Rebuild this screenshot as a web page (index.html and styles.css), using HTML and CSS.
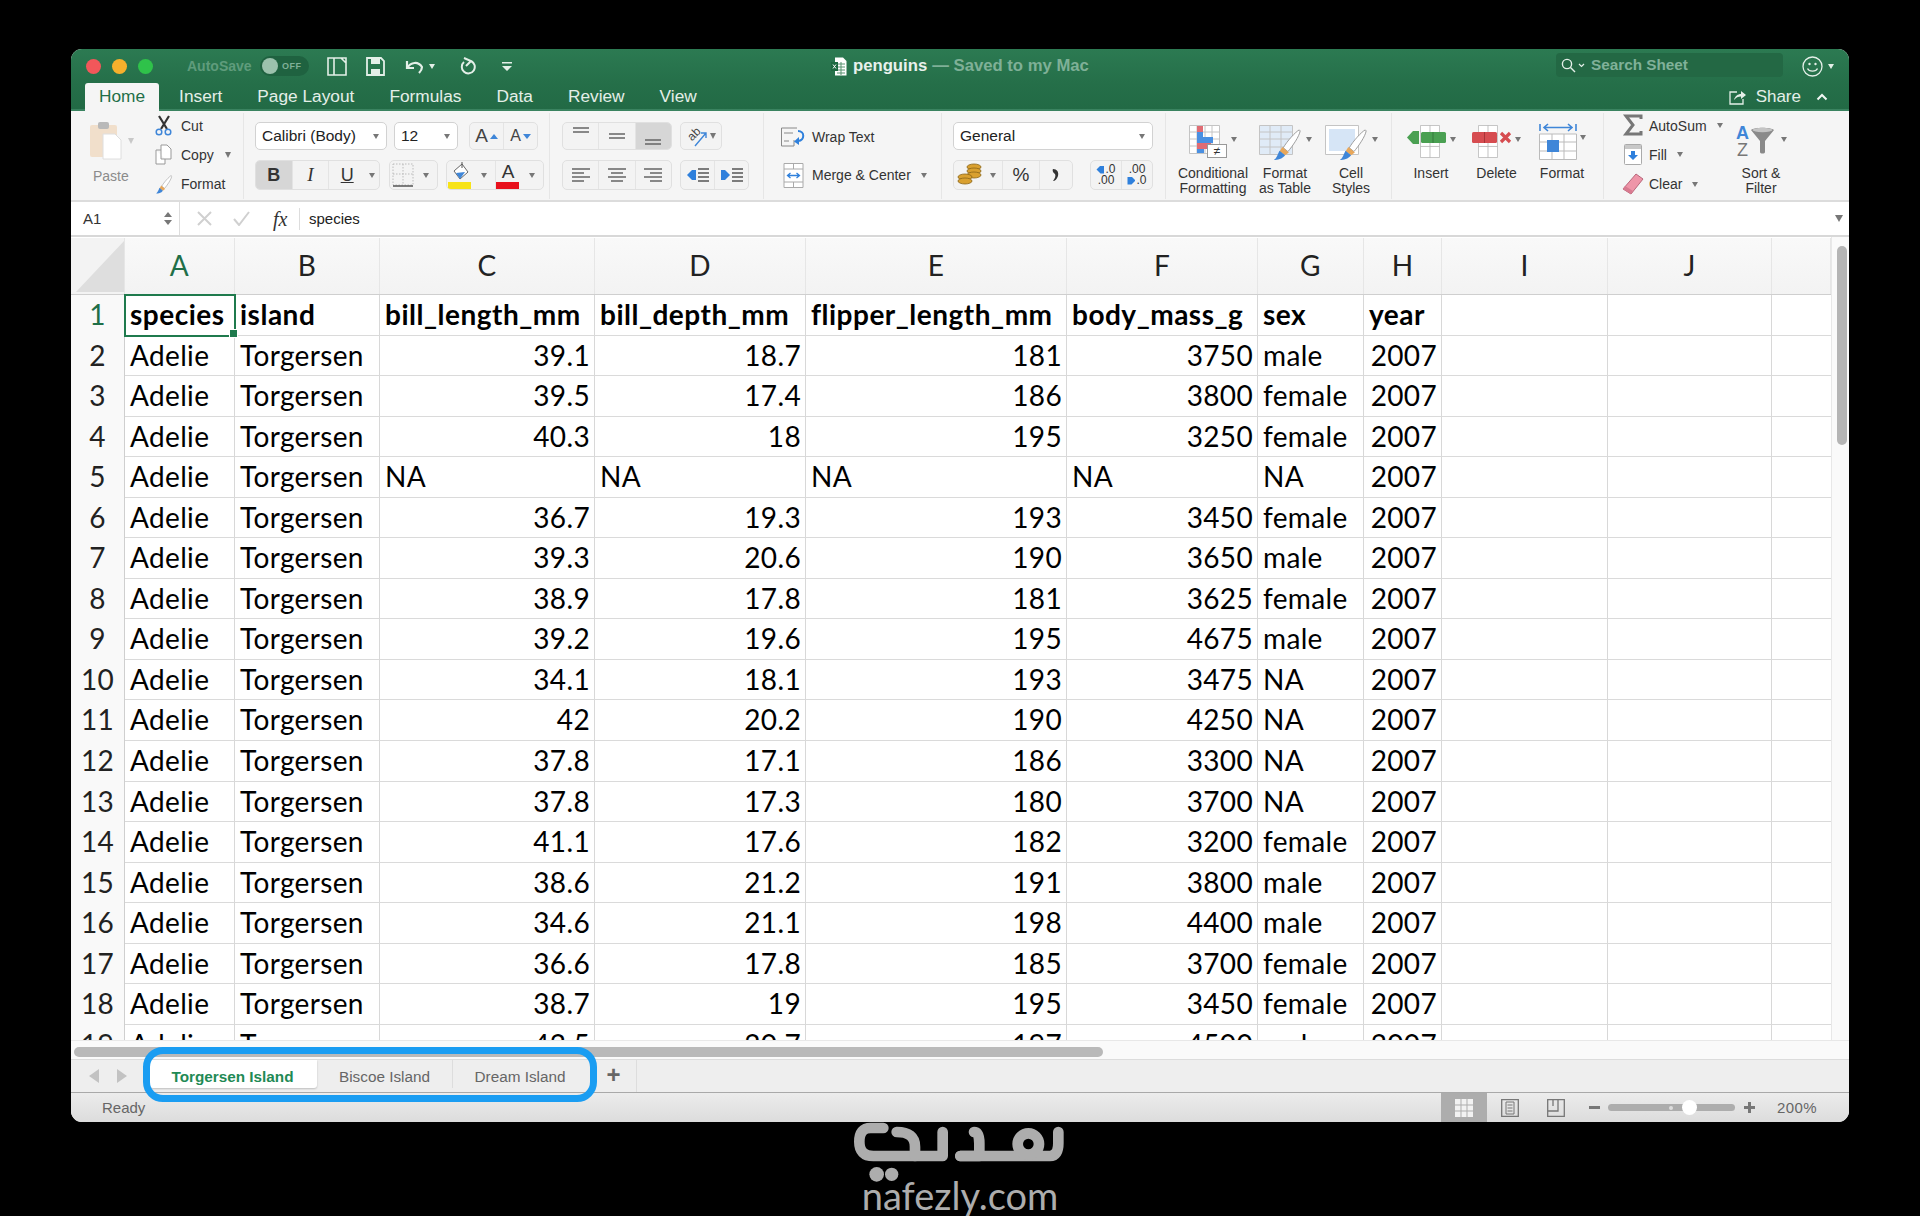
FILE: index.html
```html
<!DOCTYPE html>
<html>
<head>
<title>penguins - Excel</title>
<link rel="stylesheet" href="styles.css">
</head>
<body>

<svg class="defs" width="0" height="0">
    <symbol id="brush" viewBox="0 0 30 34">
        <path d="M28 1 C24 3 15 13 11 20 L16 24 C21 18 28 8 29 2 Z" fill="#fff" stroke="#999" stroke-width="1"/>
        <path d="M10 19 L17 25 L13 28 L7 24 Z" fill="#e8a75a"/>
        <path d="M7 23 L13 28 C10 32 5 33 1 33 C4 31 5 27 7 23 Z" fill="#3f86d8"/>
    </symbol>
    <symbol id="cellgrid" viewBox="0 0 24 40">
        <path d="M.5 .5 H23.5 V39.5 H.5 Z M12 .5 V39.5 M.5 13 H23.5 M.5 26 H23.5" fill="#fff" stroke="#b5b5b5"/>
    </symbol>
</svg>

<div class="window">

    <div class="titlebar">
        <div class="lights">
            <span class="light red"></span>
            <span class="light yellow"></span>
            <span class="light green"></span>
        </div>
        <span class="autosave">AutoSave</span>
        <span class="toggle"><i></i>OFF</span>
        <svg class="qa sidebar" width="20" height="19" viewBox="0 0 20 19"><path d="M1 1 H19 V18 H1 Z M7 1 V18 M7 1 H14 L19 6" fill="none" stroke="#e4efe8" stroke-width="1.6"/></svg>
        <svg class="qa save" width="19" height="19" viewBox="0 0 19 19"><path d="M1 1 H15 L18 4 V18 H1 Z" fill="none" stroke="#e4efe8" stroke-width="1.8"/><path d="M5 1 H14 V7 H5 Z M5 12 H14 V18 H5 Z" fill="#e4efe8"/></svg>
        <svg class="qa undo" width="19" height="15" viewBox="0 0 19 15"><path d="M2 2 V9 H9 M2 9 C6 3 13 2 17 8 C17 10 16 12 14 14" fill="none" stroke="#e4efe8" stroke-width="2.2"/></svg>
        <span class="caret light-caret"></span>
        <svg class="qa redo" width="16" height="19" viewBox="0 0 16 19"><path d="M11 4 A6.5 6.5 0 1 1 4 5 M4 1 L11 4 L6 9" fill="none" stroke="#e4efe8" stroke-width="2"/></svg>
        <svg class="qa more" width="12" height="11" viewBox="0 0 12 11"><path d="M1 1 H11 V2.5 H1 Z M1 5 H11 L6 10 Z" fill="#e4efe8"/></svg>
        <div class="doc-title">
            <svg width="16" height="19" viewBox="0 0 16 19"><path d="M4 .5 H12 L15.5 4 V18.5 H4 Z" fill="#fff"/><path d="M6 7 H14 M6 10 H14 M6 13 H14 M6 16 H14 M10 5 V18" stroke="#57916f"/><path d="M0 5 H7 V14 H0 Z" fill="#1d6a41"/><path d="M2 7.5 L5 11.5 M5 7.5 L2 11.5" stroke="#fff"/></svg>
            <b>penguins</b><span>— Saved to my Mac</span>
        </div>
        <div class="search">
            <svg width="15" height="15" viewBox="0 0 15 15"><circle cx="6" cy="6" r="4.6" fill="none" stroke="#e4efe8" stroke-width="1.4"/><path d="M9.5 9.5 L14 14" stroke="#e4efe8" stroke-width="1.4"/></svg>
            <svg width="7" height="5" viewBox="0 0 7 5"><path d="M1 1 L3.5 3.5 L6 1" fill="none" stroke="#e4efe8" stroke-width="1.2"/></svg>
            <span>Search Sheet</span>
        </div>
        <svg class="smile" width="21" height="21" viewBox="0 0 21 21"><circle cx="10.5" cy="10.5" r="9.5" fill="none" stroke="#e4efe8" stroke-width="1.3"/><circle cx="7.5" cy="8" r="1.2" fill="#e4efe8"/><circle cx="13.5" cy="8" r="1.2" fill="#e4efe8"/><path d="M5.5 12.5 C7 16 14 16 15.5 12.5" fill="none" stroke="#e4efe8" stroke-width="1.3"/></svg>
        <span class="caret light-caret"></span>
    </div>

    <div class="tabsbar">
        <span class="ribbon-tab active">Home</span>
        <span class="ribbon-tab">Insert</span>
        <span class="ribbon-tab">Page Layout</span>
        <span class="ribbon-tab">Formulas</span>
        <span class="ribbon-tab">Data</span>
        <span class="ribbon-tab">Review</span>
        <span class="ribbon-tab">View</span>
        <div class="share">
            <svg width="18" height="16" viewBox="0 0 18 16"><path d="M8 3 H1 V15 H14 V10" fill="none" stroke="#e4efe8" stroke-width="1.3"/><path d="M5 11 C6 7 9 5 12 5 V2 L17 6 L12 10 V7.5 C9 7.5 7 8.5 5 11 Z" fill="#e4efe8"/></svg>
            <span>Share</span>
            <svg class="collapse" width="12" height="8" viewBox="0 0 12 8"><path d="M1.5 6.5 L6 2 L10.5 6.5" fill="none" stroke="#f2f7f4" stroke-width="2"/></svg>
        </div>
    </div>

    <div class="ribbon">

        <div class="group clipboard">
            <div class="paste">
                <div class="paste-icon">
                    <svg width="34" height="40" viewBox="0 0 34 40"><rect x="1" y="4" width="27" height="32" rx="2" fill="#f1dfcb"/><rect x="9" y="1" width="11" height="7" rx="2" fill="#b9b9b9"/><path d="M14 13 H26 L32 19 V38 H14 Z" fill="#fff" stroke="#dedede"/></svg>
                    <span class="caret dim"></span>
                </div>
                <span class="label muted">Paste</span>
            </div>
            <div class="clip-list">
                <div class="clip-row">
                    <svg width="18" height="21" viewBox="0 0 18 21"><path d="M4 1 L12 14 M14 1 L6 14" stroke="#333" stroke-width="2.2"/><circle cx="4" cy="17" r="2.8" fill="none" stroke="#3f86d8" stroke-width="1.5"/><circle cx="13" cy="17" r="2.8" fill="none" stroke="#3f86d8" stroke-width="1.5"/></svg>
                    <span>Cut</span>
                </div>
                <div class="clip-row">
                    <svg width="18" height="21" viewBox="0 0 18 21"><path d="M6 1 H12 L16 5 V15 H6 Z M1 6 H6 M1 6 V20 H10 V15" fill="#fff" stroke="#999"/></svg>
                    <span>Copy</span><span class="caret"></span>
                </div>
                <div class="clip-row">
                    <svg width="20" height="19" viewBox="0 0 30 34"><use href="#brush"/></svg>
                    <span>Format</span>
                </div>
            </div>
        </div>

        <div class="group font">
            <div class="tool-row">
                <div class="select font-name"><span>Calibri (Body)</span><span class="caret"></span></div>
                <div class="select font-size"><span>12</span><span class="caret"></span></div>
                <div class="btns font-grow">
                    <span class="btn"><span class="big-a">A</span><span class="up"></span></span>
                    <span class="btn"><span class="small-a">A</span><span class="down"></span></span>
                </div>
            </div>
            <div class="tool-row second">
                <div class="btns biu">
                    <span class="btn on"><b>B</b></span>
                    <span class="btn"><i class="serif-i">I</i></span>
                    <span class="btn"><u>U</u></span>
                    <span class="btn narrow"><span class="caret"></span></span>
                </div>
                <div class="btns borders">
                    <span class="btn"><svg width="22" height="24" viewBox="0 0 22 24"><path d="M1 1 H21 V22 H1 Z M11 1 V22 M1 11 H21" fill="none" stroke="#bbb" stroke-dasharray="1.5 1.5"/><path d="M1 23 H21" stroke="#555" stroke-width="1.5"/></svg></span>
                    <span class="btn narrow"><span class="caret"></span></span>
                </div>
                <div class="btns colors">
                    <span class="btn"><svg width="24" height="28" viewBox="0 0 24 28"><path d="M6 10 L14 3 L20 11 L12 18 Z" fill="#fff" stroke="#666"/><path d="M8 12 L17 11 L12 18 Z" fill="#3f86d8"/><path d="M14 1 V7" stroke="#555"/><rect y="21" width="23" height="7" fill="#f7e318"/></svg></span>
                    <span class="btn narrow"><span class="caret"></span></span>
                    <span class="btn"><svg width="24" height="28" viewBox="0 0 24 28"><text x="12" y="17" text-anchor="middle" class="icon-a">A</text><rect y="21" width="23" height="7" fill="#e8101c"/></svg></span>
                    <span class="btn narrow"><span class="caret"></span></span>
                </div>
            </div>
        </div>

        <div class="group align">
            <div class="tool-row">
                <div class="btns triple">
                    <span class="btn"><svg width="16" height="20" viewBox="0 0 16 20"><path d="M0 2 H16 M0 6 H16" stroke="#666" stroke-width="1.3"/></svg></span>
                    <span class="btn"><svg width="16" height="20" viewBox="0 0 16 20"><path d="M0 8 H16 M0 12 H16" stroke="#666" stroke-width="1.3"/></svg></span>
                    <span class="btn on"><svg width="16" height="20" viewBox="0 0 16 20"><path d="M0 14 H16 M0 18 H16" stroke="#666" stroke-width="1.3"/></svg></span>
                </div>
                <div class="btns orient">
                    <span class="btn"><svg width="24" height="24" viewBox="0 0 24 24"><text x="12" y="13" text-anchor="middle" transform="rotate(-45 12 12)" class="icon-ab">ab</text><path d="M11 22 L22 9 M17 9 H22 V14" fill="none" stroke="#3f86d8" stroke-width="1.4"/></svg></span>
                    <span class="caret"></span>
                </div>
            </div>
            <div class="tool-row second">
                <div class="btns triple">
                    <span class="btn"><svg width="18" height="14" viewBox="0 0 18 14"><path d="M0 1 H18 M0 5 H12 M0 9 H18 M0 13 H12" stroke="#666" stroke-width="1.3"/></svg></span>
                    <span class="btn"><svg width="18" height="14" viewBox="0 0 18 14"><path d="M0 1 H18 M3 5 H15 M0 9 H18 M3 13 H15" stroke="#666" stroke-width="1.3"/></svg></span>
                    <span class="btn"><svg width="18" height="14" viewBox="0 0 18 14"><path d="M0 1 H18 M6 5 H18 M0 9 H18 M6 13 H18" stroke="#666" stroke-width="1.3"/></svg></span>
                </div>
                <div class="btns indent">
                    <span class="btn"><svg width="22" height="14" viewBox="0 0 22 14"><path d="M0 7 L5 2 H9 V12 H5 Z" fill="#2f80dc"/><path d="M11 1 H22 M11 5 H22 M11 9 H22 M11 13 H22" stroke="#555" stroke-width="1.3"/></svg></span>
                    <span class="btn"><svg width="22" height="14" viewBox="0 0 22 14"><path d="M9 7 L4 2 H0 V12 H4 Z" fill="#2f80dc"/><path d="M11 1 H22 M11 5 H22 M11 9 H22 M11 13 H22" stroke="#555" stroke-width="1.3"/></svg></span>
                </div>
            </div>
        </div>

        <div class="group wrap">
            <div class="wrap-row">
                <svg width="25" height="20" viewBox="0 0 25 20"><path d="M.5 1 H16 M.5 1 V19 H13 V13 M3 6 H12 M3 14 H8" fill="none" stroke="#888"/><path d="M17 4 C24 4 24 13 17 14" fill="none" stroke="#2f80dc" stroke-width="2"/><path d="M18 10 L13 14.5 L18 18 Z" fill="#2f80dc"/></svg>
                <span>Wrap Text</span>
            </div>
            <div class="wrap-row">
                <svg width="20" height="25" viewBox="0 0 20 25"><path d="M.5 .5 H19.5 V24.5 H.5 Z M.5 6 H19.5 M.5 19 H19.5 M10 .5 V6 M10 19 V24.5" fill="#fff" stroke="#aaa"/><path d="M4 12.5 H16 M7 10 L4 12.5 L7 15 M13 10 L16 12.5 L13 15" fill="none" stroke="#2f80dc" stroke-width="1.3"/></svg>
                <span>Merge &amp; Center</span><span class="caret"></span>
            </div>
        </div>

        <div class="group number">
            <div class="tool-row">
                <div class="select number-format"><span>General</span><span class="caret"></span></div>
            </div>
            <div class="tool-row second">
                <div class="btns currency">
                    <span class="btn coins"><svg width="25" height="24" viewBox="0 0 25 24"><g fill="#d9a02f" stroke="#8a6416" stroke-width=".8"><ellipse cx="17" cy="4" rx="7" ry="3"/><ellipse cx="17" cy="8" rx="7" ry="3"/><ellipse cx="17" cy="12" rx="7" ry="3"/><ellipse cx="8" cy="14" rx="7" ry="3"/><ellipse cx="8" cy="18" rx="7" ry="3"/></g></svg></span>
                    <span class="btn narrow"><span class="caret"></span></span>
                    <span class="btn percent">%</span>
                    <span class="btn comma"><svg width="8" height="14" viewBox="0 0 8 14"><path d="M1 1 C5 1 7 4 6 8 C5 11 3 13 1 13 C3 10 4 8 3 6 C1 5 0 2 1 1 Z" fill="#333"/></svg></span>
                </div>
                <div class="btns decimals">
                    <span class="btn dec"><span class="dec-line"><em class="arrow-left"></em>.0</span><span class="dec-line">.00</span></span>
                    <span class="btn dec"><span class="dec-line">.00</span><span class="dec-line"><em class="arrow-right"></em>.0</span></span>
                </div>
            </div>
        </div>

        <div class="group styles">
            <div class="big-tool w-cond">
                <div class="big-icon">
                    <svg width="39" height="33" viewBox="0 0 39 33"><path d="M.5 .5 H30.5 V28.5 H.5 Z M8 .5 V28.5 M16 .5 V28.5 M23 .5 V28.5 M.5 7 H30.5 M.5 14 H30.5 M.5 21 H30.5" fill="#fff" stroke="#c4c4c4"/><path d="M8 1 H14 V7 H8 Z M8 18 H22 V24 H8 Z" fill="#e06c74"/><path d="M8 7 H14 V12 H8 Z M8 12 H24 V18 H8 Z M8 24 H15 V28 H8 Z" fill="#4a90e2"/><rect x="18.500" y="19.500" width="19" height="13" fill="#fff" stroke="#999"/><text x="28" y="30" text-anchor="middle" class="icon-ne">≠</text></svg>
                    <span class="caret"></span>
                </div>
                <span class="label">Conditional<br>Formatting</span>
            </div>
            <div class="big-tool w-table">
                <div class="big-icon">
                    <svg width="44" height="36" viewBox="0 0 44 36"><path d="M.5 .5 H33.5 V29.5 H.5 Z M11 .5 V29.5 M22 .5 V29.5 M.5 7 H33.5 M.5 14 H33.5 M.5 22 H33.5" fill="#e0ebf7" stroke="#c4c4c4"/><svg x="13" y="4" width="30" height="32" viewBox="0 0 30 34"><use href="#brush"/></svg></svg>
                    <span class="caret"></span>
                </div>
                <span class="label">Format<br>as Table</span>
            </div>
            <div class="big-tool w-cell">
                <div class="big-icon">
                    <svg width="44" height="36" viewBox="0 0 44 36"><path d="M.5 .5 H33.5 V29.5 H.5 Z" fill="#fff" stroke="#c4c4c4"/><path d="M4 4 H30 V26 H4 Z" fill="#d6e5f6"/><svg x="13" y="4" width="30" height="32" viewBox="0 0 30 34"><use href="#brush"/></svg></svg>
                    <span class="caret"></span>
                </div>
                <span class="label">Cell<br>Styles</span>
            </div>
        </div>

        <div class="group cells">
            <div class="big-tool w-insert">
                <div class="big-icon">
                    <svg width="40" height="33" viewBox="0 0 40 33"><svg x="13" y="0" width="20" height="33" viewBox="0 0 24 40"><use href="#cellgrid"/></svg><rect x="14" y="7" width="25" height="11" rx="1.5" fill="#4aa052"/><path d="M26 7 V18" stroke="#357a3c"/><path d="M0 12.500 L6 6 H12 V19 H6 Z" fill="#4aa052"/></svg>
                    <span class="caret"></span>
                </div>
                <span class="label">Insert</span>
            </div>
            <div class="big-tool w-delete">
                <div class="big-icon">
                    <svg width="40" height="33" viewBox="0 0 40 33"><svg x="6" y="0" width="20" height="33" viewBox="0 0 24 40"><use href="#cellgrid"/></svg><rect x="0" y="7" width="25" height="11" rx="1.5" fill="#d64c50"/><path d="M12.500 7 V18" stroke="#a83437"/><path d="M29 8 L38 17 M38 8 L29 17" stroke="#d64c50" stroke-width="3.2"/></svg>
                    <span class="caret"></span>
                </div>
                <span class="label">Delete</span>
            </div>
            <div class="big-tool w-format">
                <div class="big-icon format-icon">
                    <svg width="38" height="37" viewBox="0 0 38 37"><path d="M1 1 V8 M37 1 V8 M5 4.500 H33 M9 1 L5 4.500 L9 8 M29 1 L33 4.500 L29 8" fill="none" stroke="#3f86d8" stroke-width="1.6"/><path d="M.5 11 H37.500 V36.500 H.5 Z M13 11 V36.500 M25 11 V36.500 M.5 19 H37.500 M.5 28 H37.500" fill="#fff" stroke="#bbb"/><rect x="8" y="17" width="12" height="12" fill="#3f86d8"/></svg>
                    <span class="caret"></span>
                </div>
                <span class="label">Format</span>
            </div>
        </div>

        <div class="group editing">
            <div class="edit-list">
                <div class="edit-row">
                    <svg width="18" height="23" viewBox="0 0 18 23"><path d="M17 5 V2 H2 L9 11 L2 20 H17 V17" fill="none" stroke="#777" stroke-width="3"/></svg>
                    <span>AutoSum</span><span class="caret"></span>
                </div>
                <div class="edit-row">
                    <svg width="18" height="21" viewBox="0 0 18 21"><rect x=".5" y=".5" width="17" height="20" rx="1" fill="#fff" stroke="#aaa"/><rect x="1" y="1" width="16" height="4" fill="#c8c8c8"/><path d="M9 16 L4 11 H7 V7 H11 V11 H14 Z" fill="#2f80dc"/></svg>
                    <span>Fill</span><span class="caret"></span>
                </div>
                <div class="edit-row">
                    <svg width="22" height="22" viewBox="0 0 22 22"><path d="M14 1 L21 6 L9 21 L1 16 Z" fill="#ee95a8" stroke="#b7667a"/><path d="M1 16 L9 21 L11 18 L3 13 Z" fill="#d97a90"/></svg>
                    <span>Clear</span><span class="caret"></span>
                </div>
            </div>
            <div class="big-tool w-sort">
                <div class="big-icon">
                    <svg width="42" height="36" viewBox="0 0 42 36"><text x="0" y="14" class="icon-az blue">A</text><text x="1" y="31" class="icon-az gray">Z</text><path d="M15 5 C18 2 35 2 38 5 L29 16 V27 C29 29 24 29 24 27 V16 Z" fill="#8a8a8a"/><ellipse cx="26.500" cy="5" rx="10" ry="2.200" fill="#c4c4c4"/></svg>
                    <span class="caret"></span>
                </div>
                <span class="label">Sort &amp;<br>Filter</span>
            </div>
        </div>

    </div>

    <div class="formula-bar">
        <div class="name-box">
            <span>A1</span>
            <span class="stepper"><em class="up"></em><em class="down"></em></span>
        </div>
        <svg class="fx-icon" width="15" height="15" viewBox="0 0 15 15"><path d="M1 1 L14 14 M14 1 L1 14" stroke="#d0d0d0" stroke-width="2"/></svg>
        <svg class="fx-icon" width="17" height="15" viewBox="0 0 17 15"><path d="M1 8 L6 14 L16 1" fill="none" stroke="#d0d0d0" stroke-width="2"/></svg>
        <span class="fx">fx</span>
        <span class="formula-text">species</span>
        <span class="down formula-more"></span>
    </div>

    <div class="sheet-area">
        <div class="sheet">
            <div class="col-head">
                <div class="corner"><svg width="48" height="51" viewBox="0 0 48 51"><path d="M48 0 V51 H0 Z" fill="#dedede"/></svg></div>
                <div class="on-col">A</div><div>B</div><div>C</div><div>D</div><div>E</div><div>F</div><div>G</div><div>H</div><div>I</div><div>J</div><div></div>
            </div>
            <div class="row head"><div class="rh on-row">1</div><div class="selected">species</div><div>island</div><div>bill_length_mm</div><div>bill_depth_mm</div><div>flipper_length_mm</div><div>body_mass_g</div><div>sex</div><div>year</div><div></div><div></div><div></div></div>
            <div class="row"><div class="rh">2</div><div>Adelie</div><div>Torgersen</div><div class="n">39.1</div><div class="n">18.7</div><div class="n">181</div><div class="n">3750</div><div>male</div><div class="n">2007</div><div></div><div></div><div></div></div>
            <div class="row"><div class="rh">3</div><div>Adelie</div><div>Torgersen</div><div class="n">39.5</div><div class="n">17.4</div><div class="n">186</div><div class="n">3800</div><div>female</div><div class="n">2007</div><div></div><div></div><div></div></div>
            <div class="row"><div class="rh">4</div><div>Adelie</div><div>Torgersen</div><div class="n">40.3</div><div class="n">18</div><div class="n">195</div><div class="n">3250</div><div>female</div><div class="n">2007</div><div></div><div></div><div></div></div>
            <div class="row"><div class="rh">5</div><div>Adelie</div><div>Torgersen</div><div>NA</div><div>NA</div><div>NA</div><div>NA</div><div>NA</div><div class="n">2007</div><div></div><div></div><div></div></div>
            <div class="row"><div class="rh">6</div><div>Adelie</div><div>Torgersen</div><div class="n">36.7</div><div class="n">19.3</div><div class="n">193</div><div class="n">3450</div><div>female</div><div class="n">2007</div><div></div><div></div><div></div></div>
            <div class="row"><div class="rh">7</div><div>Adelie</div><div>Torgersen</div><div class="n">39.3</div><div class="n">20.6</div><div class="n">190</div><div class="n">3650</div><div>male</div><div class="n">2007</div><div></div><div></div><div></div></div>
            <div class="row"><div class="rh">8</div><div>Adelie</div><div>Torgersen</div><div class="n">38.9</div><div class="n">17.8</div><div class="n">181</div><div class="n">3625</div><div>female</div><div class="n">2007</div><div></div><div></div><div></div></div>
            <div class="row"><div class="rh">9</div><div>Adelie</div><div>Torgersen</div><div class="n">39.2</div><div class="n">19.6</div><div class="n">195</div><div class="n">4675</div><div>male</div><div class="n">2007</div><div></div><div></div><div></div></div>
            <div class="row"><div class="rh">10</div><div>Adelie</div><div>Torgersen</div><div class="n">34.1</div><div class="n">18.1</div><div class="n">193</div><div class="n">3475</div><div>NA</div><div class="n">2007</div><div></div><div></div><div></div></div>
            <div class="row"><div class="rh">11</div><div>Adelie</div><div>Torgersen</div><div class="n">42</div><div class="n">20.2</div><div class="n">190</div><div class="n">4250</div><div>NA</div><div class="n">2007</div><div></div><div></div><div></div></div>
            <div class="row"><div class="rh">12</div><div>Adelie</div><div>Torgersen</div><div class="n">37.8</div><div class="n">17.1</div><div class="n">186</div><div class="n">3300</div><div>NA</div><div class="n">2007</div><div></div><div></div><div></div></div>
            <div class="row"><div class="rh">13</div><div>Adelie</div><div>Torgersen</div><div class="n">37.8</div><div class="n">17.3</div><div class="n">180</div><div class="n">3700</div><div>NA</div><div class="n">2007</div><div></div><div></div><div></div></div>
            <div class="row"><div class="rh">14</div><div>Adelie</div><div>Torgersen</div><div class="n">41.1</div><div class="n">17.6</div><div class="n">182</div><div class="n">3200</div><div>female</div><div class="n">2007</div><div></div><div></div><div></div></div>
            <div class="row"><div class="rh">15</div><div>Adelie</div><div>Torgersen</div><div class="n">38.6</div><div class="n">21.2</div><div class="n">191</div><div class="n">3800</div><div>male</div><div class="n">2007</div><div></div><div></div><div></div></div>
            <div class="row"><div class="rh">16</div><div>Adelie</div><div>Torgersen</div><div class="n">34.6</div><div class="n">21.1</div><div class="n">198</div><div class="n">4400</div><div>male</div><div class="n">2007</div><div></div><div></div><div></div></div>
            <div class="row"><div class="rh">17</div><div>Adelie</div><div>Torgersen</div><div class="n">36.6</div><div class="n">17.8</div><div class="n">185</div><div class="n">3700</div><div>female</div><div class="n">2007</div><div></div><div></div><div></div></div>
            <div class="row"><div class="rh">18</div><div>Adelie</div><div>Torgersen</div><div class="n">38.7</div><div class="n">19</div><div class="n">195</div><div class="n">3450</div><div>female</div><div class="n">2007</div><div></div><div></div><div></div></div>
            <div class="row"><div class="rh">19</div><div>Adelie</div><div>Torgersen</div><div class="n">42.5</div><div class="n">20.7</div><div class="n">197</div><div class="n">4500</div><div>male</div><div class="n">2007</div><div></div><div></div><div></div></div>
        </div>
        <div class="v-scroll"><div class="v-thumb"></div></div>
    </div>

    <div class="h-scroll"><div class="h-thumb"></div></div>

    <div class="sheet-tabs">
        <div class="tab-arrows">
            <span class="tri-left"></span>
            <span class="tri-right"></span>
        </div>
        <span class="sheet-tab active">Torgersen Island</span>
        <span class="sheet-tab">Biscoe Island</span>
        <span class="sheet-tab last">Dream Island</span>
        <span class="add-sheet">+</span>
        <div class="highlight"></div>
    </div>

    <div class="statusbar">
        <span class="ready">Ready</span>
        <div class="view-btn on">
            <svg width="18" height="18" viewBox="0 0 18 18"><path d="M0 0 H18 V18 H0 Z" fill="#f2f2f2"/><path d="M6 0 V18 M12 0 V18 M0 6 H18 M0 12 H18" stroke="#adadad"/></svg>
        </div>
        <div class="view-btn">
            <svg width="18" height="18" viewBox="0 0 18 18"><path d="M.7 .7 H17.300 V17.300 H.7 Z" fill="none" stroke="#777" stroke-width="1.300"/><path d="M5 3 H13 V15 H5 Z M6.500 6 H11.500 M6.500 9 H11.500 M6.500 12 H11.500" fill="none" stroke="#777"/></svg>
        </div>
        <div class="view-btn">
            <svg width="18" height="18" viewBox="0 0 18 18"><path d="M.7 .7 H17.300 V17.300 H.7 Z M.7 12 H11 V.7 M6 .7 V7" fill="none" stroke="#777" stroke-width="1.300"/></svg>
        </div>
        <span class="zoom-sign minus"></span>
        <div class="zoom-slider"><i class="zoom-mark"></i><i class="zoom-knob"></i></div>
        <span class="zoom-sign plus"></span>
        <span class="zoom-value">200%</span>
    </div>
</div>

<div class="watermark">
    <svg width="220" height="66" viewBox="0 0 660 198">
        <g fill="none" stroke="#adadad" stroke-width="32" stroke-linecap="round" stroke-linejoin="round">
            <path d="M100 24 H62 Q28 24 28 65 Q28 108 70 108 H278 V36"/>
            <path d="M140 36 Q195 36 195 80 V108"/>
            <path d="M372 36 Q388 36 388 70 V108 H331"/>
            <path d="M331 108 H600 Q625 108 625 70 V36"/>
            <circle cx="535" cy="72" r="32"/>
        </g>
        <circle cx="80" cy="163" r="22" fill="#adadad"/>
        <circle cx="125" cy="163" r="20" fill="#adadad"/>
    </svg>
    <span class="site">nafezly.com</span>
</div>

</body>
</html>
```

FILE: styles.css
```css
* {
    box-sizing: border-box;
}

html, body {
    height: 100%;
}

body {
    margin: 0;
    padding-top: 49px;
    background: #000;
    overflow: hidden;
    font-family: "Liberation Sans", Arial, sans-serif;
    font-size: 14px;
    color: #333;
}

.defs {
    position: absolute;
}

.window {
    position: relative;
    z-index: 1;
    width: 1778px;
    height: 1073px;
    margin-left: 71px;
    border-radius: 11px;
    overflow: hidden;
    background: #fff;
}

/* title bar */
.titlebar {
    display: flex;
    align-items: center;
    height: 34px;
    padding-left: 15px;
    background: linear-gradient(#2c7a52, #256f49);
    color: #e4efe8;
}

.lights {
    display: flex;
    gap: 11px;
    width: 101px;
}

.light {
    width: 15px;
    height: 15px;
    border-radius: 50%;
}

.light.red { background: #f2575a; }
.light.yellow { background: #f6b02c; }
.light.green { background: #2fc24a; }

.autosave {
    width: 73px;
    color: #5f9c7c;
    font-weight: bold;
    font-size: 14px;
}

.toggle {
    display: flex;
    align-items: center;
    width: 49px;
    height: 20px;
    padding: 0 3px 0 2px;
    border-radius: 10px;
    background: #1f6240;
    color: #7fb097;
    font-size: 9px;
    font-weight: bold;
    letter-spacing: .5px;
}

.toggle i {
    width: 16px;
    height: 16px;
    margin-right: 4px;
    border-radius: 50%;
    background: #9cc2ad;
}

.qa {
    flex: none;
}

.sidebar { margin-left: 18px; }
.save { margin-left: 19px; }
.undo { margin-left: 20px; }
.redo { margin-left: 25px; }
.more { margin-left: 25px; }

.caret {
    display: inline-block;
    flex: none;
    width: 0;
    height: 0;
    border-left: 3.5px solid transparent;
    border-right: 3.5px solid transparent;
    border-top: 6px solid #777;
}

.caret.light-caret {
    margin-left: 5px;
    border-top-color: #e4efe8;
    border-left-width: 3px;
    border-right-width: 3px;
    border-top-width: 5px;
}

.caret.dim {
    border-top-color: #c8c8c8;
}

.doc-title {
    display: flex;
    align-items: center;
    gap: 6px;
    margin-left: 318px;
    width: 700px;
    font-size: 16.7px;
    font-weight: bold;
    color: #e8f1ec;
}

.doc-title span {
    margin-left: -1px;
    color: #7fb097;
}

.search {
    display: flex;
    align-items: center;
    gap: 2px;
    width: 227px;
    height: 24px;
    margin-left: auto;
    margin-top: -2px;
    padding-left: 5px;
    border-radius: 4px;
    background: #236844;
}

.search span {
    margin-left: 4px;
    color: #80b199;
    font-size: 15.3px;
    font-weight: bold;
}

.smile {
    margin-left: 19px;
}

.titlebar > .caret:last-child {
    margin-right: 15px;
}

/* ribbon tabs */
.tabsbar {
    display: flex;
    align-items: flex-end;
    gap: 7px;
    height: 28px;
    padding-left: 14px;
    background: linear-gradient(#256f49, #226a45);
    border-bottom: 2px solid #3a8360;
}

.ribbon-tab {
    height: 26px;
    padding: 0 14px;
    line-height: 27px;
    font-size: 17.3px;
    color: #e4efe8;
    white-space: nowrap;
}

.ribbon-tab.active {
    height: 28px;
    margin-bottom: -2px;
    margin-right: -1px;
    border-radius: 3px 3px 0 0;
    background: #f5f5f5;
    color: #1f6f48;
}

.share {
    display: flex;
    align-items: center;
    align-self: stretch;
    margin-left: auto;
    padding: 2px 21px 0 0;
    color: #e4efe8;
    font-size: 17px;
}

.share span {
    margin: 0 15px 0 9px;
}

/* ribbon */
.ribbon {
    display: flex;
    height: 91px;
    background: #f5f5f5;
    border-bottom: 2px solid #dcdcdc;
}

.group {
    position: relative;
    flex: none;
    height: 86px;
    margin-top: 2px;
    border-right: 1px solid #e6e6e6;
}

.group.clipboard { display: flex; width: 173px; padding-left: 18px; }
.group.font { width: 306px; padding: 9px 0 0 11px; }
.group.align { width: 214px; padding: 9px 0 0 12px; }
.group.wrap { width: 178px; padding: 5px 0 0 17px; }
.group.number { width: 224px; padding: 9px 0 0 11px; }
.group.styles { display: flex; width: 226px; padding: 9px 0 0 7px; }
.group.cells { display: flex; width: 212px; padding: 9px 0 0 7px; }
.group.editing { display: flex; width: 245px; border-right: none; padding-left: 18px; }

.paste {
    width: 65px;
}

.paste-icon {
    display: flex;
    align-items: center;
    gap: 5px;
    height: 44px;
    margin-top: 6px;
}

.paste .label {
    display: block;
    margin-top: 6px;
    margin-left: 4px;
    text-align: left;
}

.muted {
    color: #8b8b8b;
}

.clip-list, .edit-list {
    display: flex;
    flex-direction: column;
    margin-top: -2px;
}

.clip-row {
    display: flex;
    align-items: center;
    gap: 7px;
    height: 30px;
    font-size: 14px;
}

.clip-row svg {
    width: 20px;
}

.clip-row .caret {
    margin-left: 4px;
}

.tool-row {
    display: flex;
    gap: 8px;
    height: 28px;
}

.tool-row.second {
    height: 30px;
    margin-top: 10px;
}

.select {
    display: flex;
    align-items: center;
    justify-content: space-between;
    padding: 0 7px 0 6px;
    border: 1px solid #d2d2d2;
    border-radius: 5px;
    background: #fff;
    font-size: 15.5px;
    color: #222;
}

.select .caret {
    border-left-width: 3px;
    border-right-width: 3px;
    border-top-width: 5px;
}

.font-name { width: 132px; }
.font-size { width: 64px; margin-left: -1px; }
.font-grow { width: 69px; margin-left: 3px; }
.number-format { width: 200px; }

.btns {
    display: flex;
    flex: none;
    border: 1px solid #e0e0e0;
    border-radius: 5px;
    background: #f3f3f3;
    overflow: hidden;
}

.btn {
    display: flex;
    flex: 1;
    align-items: center;
    justify-content: center;
    border-left: 1px solid #e4e4e4;
    font-size: 18px;
    color: #333;
}

.btn:first-child {
    border-left: none;
}

.btn.on {
    background: #d6d6d6;
}

.btn.narrow {
    flex: none;
    width: 22px;
    border-left: none;
}

.btn .caret {
    border-left-width: 3px;
    border-right-width: 3px;
    border-top-width: 5px;
}

.biu { width: 125px; }
.biu .btn.narrow { width: 14px; }
.borders { width: 49px; margin-left: 1px; }
.colors { width: 98px; }

.serif-i {
    font-family: "Liberation Serif", serif;
    font-size: 19px;
}

.big-a { font-size: 19px; color: #444; }
.small-a { font-size: 16px; color: #444; }

.up, .down {
    display: inline-block;
    width: 0;
    height: 0;
    border-left: 4px solid transparent;
    border-right: 4px solid transparent;
}

.up { border-bottom: 5px solid #3f86d8; margin-left: 2px; }
.down { border-top: 5px solid #3f86d8; margin-left: 2px; }

.triple { width: 110px; }
.orient {
    align-items: center;
    width: 42px;
    padding-right: 5px;
}
.indent { width: 69px; }

.icon-a { font: 19px "Liberation Sans", sans-serif; fill: #333; }
.icon-ab { font: 12px "Liberation Sans", sans-serif; fill: #444; }
.icon-ne { font: 12px "Liberation Sans", sans-serif; fill: #333; }
.icon-az { font: 18px "Liberation Sans", sans-serif; }
.icon-az.blue { fill: #3f86d8; font-weight: bold; }
.icon-az.gray { fill: #777; }

.wrap-row {
    display: flex;
    align-items: center;
    gap: 6px;
    height: 38px;
}

.wrap-row svg {
    width: 25px;
}

.wrap-row .caret {
    margin-left: 4px;
    border-left-width: 3px;
    border-right-width: 3px;
    border-top-width: 5px;
}

.currency { width: 120px; }
.currency .btn.coins { flex: none; width: 30px; }
.currency .btn.narrow { width: 18px; }
.currency .btn.percent { flex: none; width: 37px; font-size: 19px; }
.decimals { width: 63px; margin-left: 9px; }

.dec {
    flex-direction: column;
    font-size: 12px;
    line-height: 11px;
}

.dec-line {
    display: flex;
    align-items: center;
}

.arrow-left, .arrow-right {
    width: 8px;
    height: 8px;
    margin-right: 1px;
    background: #2f80dc;
}

.arrow-left { clip-path: polygon(0 50%, 50% 0, 100% 0, 100% 100%, 50% 100%); }
.arrow-right { clip-path: polygon(100% 50%, 50% 0, 0 0, 0 100%, 50% 100%); }

.big-tool {
    display: flex;
    flex: none;
    flex-direction: column;
    align-items: center;
}

.big-icon {
    display: flex;
    align-items: flex-start;
    gap: 3px;
    height: 44px;
    padding-top: 3px;
}

.big-icon .caret {
    margin-top: 12px;
    border-left-width: 3px;
    border-right-width: 3px;
    border-top-width: 5px;
}

.big-icon.format-icon {
    padding-top: 1px;
}

.label {
    text-align: center;
    font-size: 14px;
    line-height: 15px;
    white-space: nowrap;
}

.w-cond { width: 80px; }
.w-table { width: 64px; }
.w-cell { width: 68px; }
.w-insert { width: 64px; }
.w-delete { width: 67px; }
.w-format { width: 64px; }

.w-sort {
    width: 70px;
    margin-left: 1px;
    padding-top: 9px;
}

.edit-list {
    width: 103px;
}

.edit-row {
    display: flex;
    align-items: center;
    gap: 5px;
    height: 30px;
}

.edit-row svg {
    width: 22px;
}

.edit-row .caret {
    margin-left: 5px;
    border-left-width: 3px;
    border-right-width: 3px;
    border-top-width: 5px;
}

/* formula bar */
.formula-bar {
    display: flex;
    align-items: center;
    height: 35px;
    border-bottom: 2px solid #d8d8d8;
    background: #fff;
}

.name-box {
    display: flex;
    align-items: center;
    justify-content: space-between;
    width: 109px;
    height: 100%;
    padding: 0 7px 0 12px;
    border-right: 1px solid #ddd;
    font-size: 15px;
}

.stepper {
    display: flex;
    flex-direction: column;
    gap: 3px;
}

.stepper em {
    margin: 0;
    border-bottom-color: #777;
    border-top-color: #777;
}

.fx-icon {
    flex: none;
}

.fx-icon:nth-of-type(1) { margin-left: 17px; }
.fx-icon:nth-of-type(2) { margin-left: 21px; }

.fx {
    width: 27px;
    margin-left: 23px;
    border-right: 1px solid #ddd;
    font-family: "Liberation Serif", serif;
    font-style: italic;
    font-size: 20px;
    line-height: 22px;
}

.formula-text {
    margin-left: 9px;
    font-size: 15px;
    color: #222;
}

.formula-more {
    margin-left: auto;
    margin-right: 6px;
    border-top: 7px solid #777;
}

/* sheet */
.sheet-area {
    display: flex;
    height: 803px;
}

.sheet {
    flex: none;
    width: 1760px;
    height: 803px;
    overflow: hidden;
    font-family: Lato, "Liberation Sans", sans-serif;
    font-size: 28px;
    letter-spacing: .35px;
    color: #000;
    background: #fff;
}

.col-head, .row {
    display: grid;
    grid-template-columns: 54px 110px 145px 215px 211px 261px 191px 106px 78px 166px 164px 59px;
}

.col-head {
    height: 57px;
    margin-top: 1px;
    background: linear-gradient(#f9f9f9, #f3f3f3);
    border-bottom: 1px solid #cfcfcf;
    text-align: center;
    line-height: 54px;
    color: #222;
}

.col-head > div {
    border-right: 1px solid #e6e6e6;
}

.col-head .on-col {
    color: #1f6f48;
}

.corner {
    padding: 3px 0 0 4px;
    background: #f3f3f3;
    line-height: 0;
}

.row {
    height: 40.55px;
    line-height: 39px;
}

.row > div {
    position: relative;
    padding: 0 4px 0 5px;
    border-right: 1px solid #d8d8d8;
    border-bottom: 1px solid #dadada;
    white-space: nowrap;
}

.row > div:last-child {
    border-right: none;
}

.row.head {
    font-weight: bold;
    letter-spacing: .5px;
}

.row > .rh {
    padding: 0;
    border-bottom: none;
    border-right: 1px solid #cfcfcf;
    background: #f9f9f9;
    font-weight: normal;
    text-align: center;
    color: #222;
}

.row > .rh.on-row {
    color: #1f6f48;
}

.row > .n {
    text-align: right;
}

.row > .selected {
    z-index: 1;
    outline: 2px solid #1f7a4d;
    outline-offset: -1px;
}

.row > .selected::after {
    content: "";
    position: absolute;
    right: -4px;
    bottom: -3px;
    width: 7px;
    height: 7px;
    border: 1px solid #fff;
    background: #1f7a4d;
}

.v-scroll {
    flex: 1;
    padding: 9px 3px 0 5px;
    border-left: 1px solid #e8e8e8;
    background: #fafafa;
}

.v-thumb {
    width: 10px;
    height: 199px;
    border-radius: 5px;
    background: #b5b5b5;
}

.h-scroll {
    height: 20px;
    padding: 6px 0 0 3px;
    border-top: 1px solid #e8e8e8;
    border-bottom: 1px solid #dcdcdc;
    background: #fafafa;
}

.h-thumb {
    width: 1029px;
    height: 10px;
    border-radius: 5px;
    background: #b9b9b9;
}

/* sheet tabs */
.sheet-tabs {
    position: relative;
    display: flex;
    align-items: flex-start;
    height: 33px;
    background: #eeeeee;
    border-bottom: 1px solid #a9a9a9;
    font-size: 15.3px;
    color: #666;
}

.tab-arrows {
    display: flex;
    align-items: center;
    gap: 18px;
    width: 79px;
    height: 32px;
    padding-left: 18px;
}

.tri-left, .tri-right {
    width: 0;
    height: 0;
    border-top: 7px solid transparent;
    border-bottom: 7px solid transparent;
}

.tri-left { border-right: 10px solid #c2c2c2; }
.tri-right { border-left: 10px solid #c2c2c2; }

.sheet-tab {
    width: 136px;
    height: 28px;
    text-align: center;
    line-height: 33px;
    border-right: 1px solid #dddddd;
}

.sheet-tab.active {
    width: 167px;
    padding-right: 2px;
    background: #fff;
    color: #1f8a55;
    font-weight: bold;
    border-radius: 0 0 3px 3px;
    box-shadow: 0 1px 2px rgba(0, 0, 0, .2);
    border-right: none;
}

.sheet-tab.last {
    width: 138px;
    padding-right: 4px;
    border-right: none;
}

.add-sheet {
    width: 46px;
    height: 32px;
    border-right: 1px solid #dddddd;
    text-align: center;
    font-size: 24px;
    font-weight: bold;
    line-height: 29px;
    color: #666;
}

.highlight {
    position: absolute;
    left: 72px;
    top: -13px;
    width: 454px;
    height: 55px;
    border: 7px solid #1a9df2;
    border-radius: 20px;
}

/* status bar */
.statusbar {
    display: flex;
    align-items: center;
    height: 29px;
    padding: 0 22px 0 31px;
    background: linear-gradient(#ececec, #dcdcdc);
    font-size: 15px;
    color: #666;
}

.ready {
    margin-right: auto;
}

.view-btn {
    display: flex;
    align-items: center;
    justify-content: center;
    width: 46px;
    height: 100%;
}

.view-btn.on {
    background: #adadad;
}

.zoom-sign {
    position: relative;
    width: 11px;
    height: 3px;
    margin-left: 10px;
    background: #777;
}

.zoom-sign.plus {
    margin-left: 9px;
}

.zoom-sign.plus::after {
    content: "";
    position: absolute;
    left: 4px;
    top: -4px;
    width: 3px;
    height: 11px;
    background: #777;
}

.zoom-slider {
    position: relative;
    width: 127px;
    height: 7px;
    margin-left: 8px;
    border-radius: 3.5px;
    background: #adadad;
}

.zoom-mark {
    position: absolute;
    left: 61px;
    top: 1.5px;
    width: 4px;
    height: 4px;
    border-radius: 50%;
    background: #ddd;
}

.zoom-knob {
    position: absolute;
    left: 74px;
    top: -4px;
    width: 15px;
    height: 15px;
    border-radius: 50%;
    background: #fff;
}

.zoom-value {
    width: 72px;
    padding-left: 22px;
    letter-spacing: .4px;
}

/* watermark */
.watermark {
    display: flex;
    flex-direction: column;
    align-items: center;
    margin-top: -2px;
}

.watermark svg {
    display: block;
}

.site {
    margin-top: -12px;
    font-family: Lato, sans-serif;
    font-size: 38px;
    line-height: 42px;
    color: #adadad;
}
```
